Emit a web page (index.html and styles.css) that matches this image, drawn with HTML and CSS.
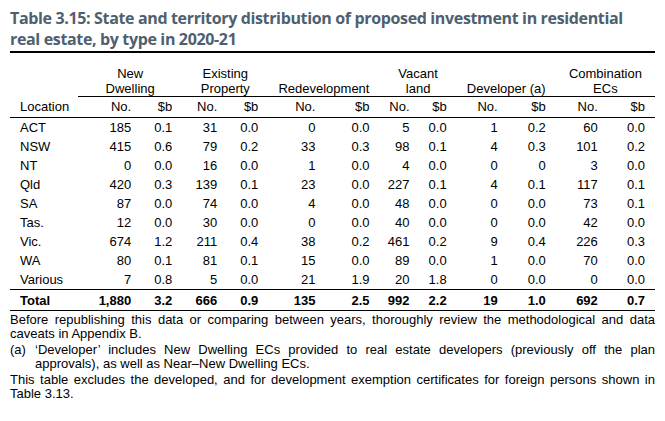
FILE: index.html
```html
<!DOCTYPE html>
<html lang="en">
<head>
<meta charset="utf-8">
<title>Table 3.15</title>
<link rel="stylesheet" href="styles.css">
</head>
<body>
<div class="page">
  <h1 class="title">Table 3.15: State and territory distribution of proposed investment in residential real estate, by type in 2020-21</h1>
  <table class="data">
    <colgroup>
      <col class="w-loc"><col class="w63"><col class="w41"><col class="w45"><col class="w41"><col class="w57"><col class="w54"><col class="w40"><col class="w37"><col class="w51"><col class="w48"><col class="w52"><col class="w47">
    </colgroup>
    <thead>
      <tr class="groups">
        <th class="blank"></th>
        <th colspan="2">New<br>Dwelling</th>
        <th colspan="2">Existing<br>Property</th>
        <th colspan="2">Redevelopment</th>
        <th colspan="2">Vacant<br>land</th>
        <th colspan="2">Developer (a)</th>
        <th colspan="2">Combination<br>ECs</th>
      </tr>
      <tr class="cols">
        <th class="loc">Location</th>
        <th>No.</th><th>$b</th>
        <th>No.</th><th>$b</th>
        <th>No.</th><th>$b</th>
        <th>No.</th><th>$b</th>
        <th>No.</th><th>$b</th>
        <th>No.</th><th>$b</th>
      </tr>
    </thead>
    <tbody>
      <tr><td class="loc">ACT</td><td>185</td><td>0.1</td><td>31</td><td>0.0</td><td>0</td><td>0.0</td><td>5</td><td>0.0</td><td>1</td><td>0.2</td><td>60</td><td>0.0</td></tr>
      <tr><td class="loc">NSW</td><td>415</td><td>0.6</td><td>79</td><td>0.2</td><td>33</td><td>0.3</td><td>98</td><td>0.1</td><td>4</td><td>0.3</td><td>101</td><td>0.2</td></tr>
      <tr><td class="loc">NT</td><td>0</td><td>0.0</td><td>16</td><td>0.0</td><td>1</td><td>0.0</td><td>4</td><td>0.0</td><td>0</td><td>0</td><td>3</td><td>0.0</td></tr>
      <tr><td class="loc">Qld</td><td>420</td><td>0.3</td><td>139</td><td>0.1</td><td>23</td><td>0.0</td><td>227</td><td>0.1</td><td>4</td><td>0.1</td><td>117</td><td>0.1</td></tr>
      <tr><td class="loc">SA</td><td>87</td><td>0.0</td><td>74</td><td>0.0</td><td>4</td><td>0.0</td><td>48</td><td>0.0</td><td>0</td><td>0.0</td><td>73</td><td>0.1</td></tr>
      <tr><td class="loc">Tas.</td><td>12</td><td>0.0</td><td>30</td><td>0.0</td><td>0</td><td>0.0</td><td>40</td><td>0.0</td><td>0</td><td>0.0</td><td>42</td><td>0.0</td></tr>
      <tr><td class="loc">Vic.</td><td>674</td><td>1.2</td><td>211</td><td>0.4</td><td>38</td><td>0.2</td><td>461</td><td>0.2</td><td>9</td><td>0.4</td><td>226</td><td>0.3</td></tr>
      <tr><td class="loc">WA</td><td>80</td><td>0.1</td><td>81</td><td>0.1</td><td>15</td><td>0.0</td><td>89</td><td>0.0</td><td>1</td><td>0.0</td><td>70</td><td>0.0</td></tr>
      <tr><td class="loc">Various</td><td>7</td><td>0.8</td><td>5</td><td>0.0</td><td>21</td><td>1.9</td><td>20</td><td>1.8</td><td>0</td><td>0.0</td><td>0</td><td>0.0</td></tr>
      <tr class="total"><td class="loc">Total</td><td>1,880</td><td>3.2</td><td>666</td><td>0.9</td><td>135</td><td>2.5</td><td>992</td><td>2.2</td><td>19</td><td>1.0</td><td>692</td><td>0.7</td></tr>
    </tbody>
  </table>
  <div class="notes">
    <p>Before republishing this data or comparing between years, thoroughly review the methodological and data caveats in Appendix B.</p>
    <p class="hang"><span class="mark">(a)</span>‘Developer’ includes New Dwelling ECs provided to real estate developers (previously off the plan approvals), as well as Near–New Dwelling ECs.</p>
    <p>This table excludes the developed, and for development exemption certificates for foreign persons shown in Table 3.13.</p>
  </div>
</div>
</body>
</html>
```

FILE: styles.css
```css
* { box-sizing: border-box; }
html, body { margin: 0; padding: 0; background: #fff; }
body { font-family: "Liberation Sans", Arial, sans-serif; color: #000; }

.page { padding: 0 10px 0 10px; width: 665px; }

.title {
  margin: 0;
  padding-top: 8px;
  padding-bottom: 1px;
  font-family: "Open Sans", "Noto Sans", sans-serif;
  font-weight: 700;
  font-size: 16px;
  line-height: 21px;
  letter-spacing: -0.35px;
  color: #4e6070;
  border-bottom: 2px solid #000;
}

.data {
  margin-top: 14px;
  width: 645px;
  border-collapse: collapse;
  table-layout: fixed;
  font-size: 13px;
}
.w-loc { width: 68px; }
.w63 { width: 63px; }
.w41 { width: 41px; }
.w45 { width: 45px; }
.w57 { width: 57px; }
.w54 { width: 54px; }
.w40 { width: 40px; }
.w37 { width: 37px; }
.w51 { width: 51px; }
.w48 { width: 48px; }
.w52 { width: 52px; }
.w47 { width: 47px; }

.data th, .data td {
  padding: 0 10px 0 0;
  text-align: right;
  font-weight: 400;
  white-space: nowrap;
}
.data .loc { text-align: left; padding-left: 10px; padding-right: 0; }

.groups th {
  text-align: center;
  vertical-align: bottom;
  line-height: 14.5px;
  padding: 0;
  border-bottom: 1px solid #000;
}
.groups th.blank { border-bottom: 0; }

.cols th {
  height: 21px;
  line-height: 20px;
  border-bottom: 1px solid #000;
}

.data tbody td { height: 19px; line-height: 19px; }

.data tr.total td {
  font-weight: 700;
  height: 21px;
  border-top: 1px solid #000;
  border-bottom: 1px solid #000;
}

.notes { font-size: 13px; line-height: 14px; }
.notes p { margin: 0 0 2px 0; text-align: justify; }
.notes p:first-child { margin-top: 2px; }
.notes .hang { padding-left: 25px; text-indent: -25px; }
.notes .mark { display: inline-block; width: 25px; text-indent: 0; }
```
